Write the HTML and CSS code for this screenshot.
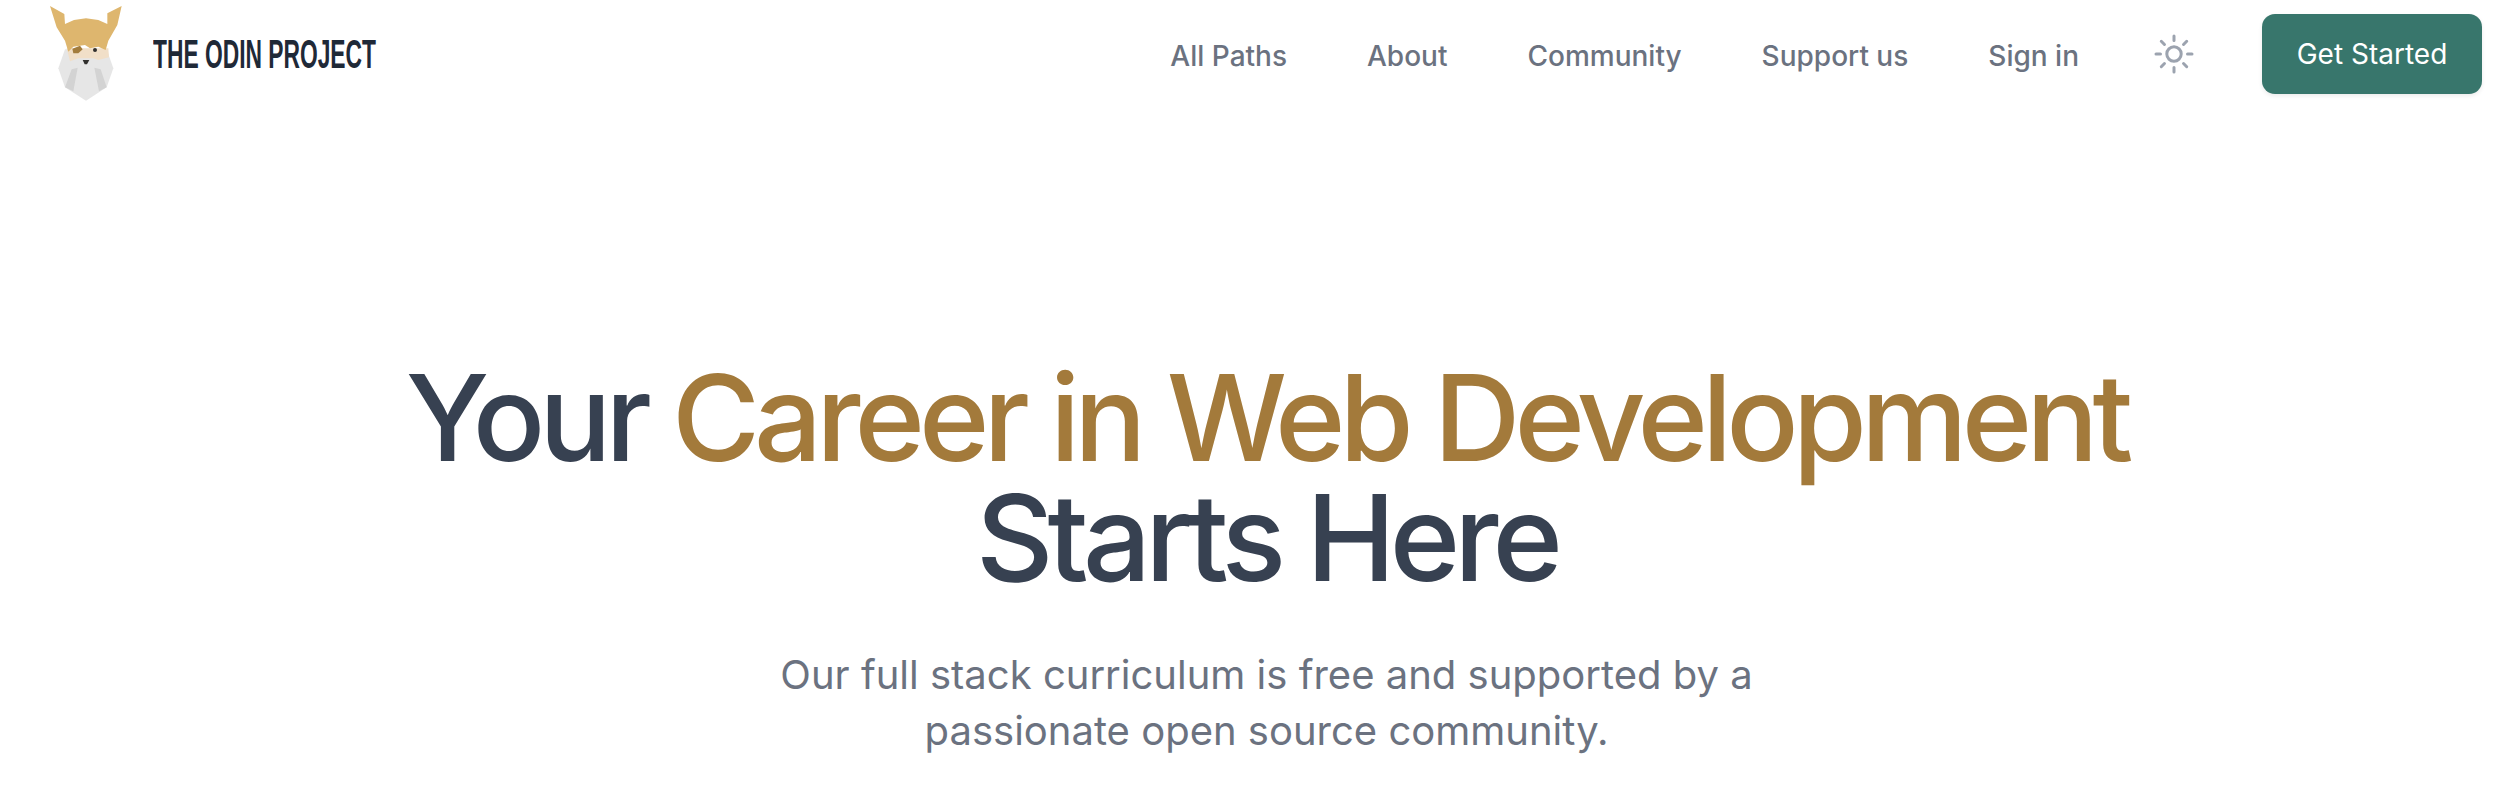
FILE: index.html
```html
<!DOCTYPE html>
<html lang="en">
<head>
<meta charset="UTF-8">
<title>The Odin Project</title>
<link rel="stylesheet" href="styles.css">
</head>
<body>
<div class="navbar">
    <a class="brand" href="#">
        <svg class="brand-logo" viewBox="0 0 270 315" width="90" height="105">
            <path fill="#e6e6e6" d="M75 148 L55 205 L75 262 L138 302 L200 262 L220 205 L200 148 Z"/>
            <path fill="#d3d3d3" d="M95 208 L75 262 L100 274 L113 203 Z M163 203 L177 274 L200 262 L182 208 Z"/>
            <path fill="#f1dfc8" d="M80 145 L205 145 L207 172 L175 180 L160 175 L115 175 L90 184 Z"/>
            <path fill="#deb66e" d="M30 18 L73 42 L75 72 L102 60 L138 55 L175 60 L202 72 L202 40 L245 18 L232 75 L205 122 L197 150 L175 140 L150 145 L135 135 L100 140 L85 155 L75 122 L50 82 Z"/>
            <path fill="#a37c3c" d="M97 146 L120 137 L128 148 L115 160 L100 160 Z"/>
            <circle fill="#31302e" cx="165" cy="150" r="6"/>
            <path fill="#31302e" d="M128 180 L148 180 L141 193 L134 193 Z"/>
        </svg>
        <span class="brand-text">THE ODIN PROJECT</span>
    </a>
    <ul class="nav-links">
        <li><a href="#">All Paths</a></li>
        <li><a href="#">About</a></li>
        <li><a href="#">Community</a></li>
        <li><a href="#">Support us</a></li>
        <li><a href="#">Sign in</a></li>
    </ul>
    <svg class="theme-icon" viewBox="0 0 24 24" width="48" height="48" fill="none" stroke="#9ca3af" stroke-width="1.5" stroke-linecap="round">
        <circle cx="12" cy="12" r="3.6"/>
        <path d="M12 3v2.25M18.36 5.64l-1.59 1.59M21 12h-2.25M18.36 18.36l-1.59-1.59M12 18.75V21M7.23 16.77l-1.59 1.59M5.25 12H3M7.23 7.23L5.64 5.64"/>
    </svg>
    <a class="get-started" href="#">Get Started</a>
</div>

<div class="hero">
    <h1>Your <span class="gold">Career in Web Development</span><br>Starts Here</h1>
    <p>Our full stack curriculum is free and supported by a<br>passionate open source community.</p>
</div>
</body>
</html>
```
FILE: styles.css
```css
html, body {
    margin: 0;
    height: 100%;
    overflow: hidden;
}
body {
    font-family: Inter, "Liberation Sans", sans-serif;
    background-color: #fff;
}
a {
    text-decoration: none;
}

.navbar {
    display: flex;
    align-items: center;
    height: 108px;
    padding: 0 27px 0 40px;
}
.brand {
    display: flex;
    align-items: center;
    margin-right: auto;
}
.brand-logo {
    margin-top: -3px;
}
.brand-text {
    margin-left: 23px;
    font-family: "Liberation Sans Narrow", "Liberation Sans", sans-serif;
    font-size: 40px;
    font-weight: bold;
    color: #1f2937;
    display: inline-block;
    transform: scaleX(0.57);
    transform-origin: left center;
    white-space: nowrap;
}
.nav-links {
    list-style-type: none;
    display: flex;
    gap: 80px;
    margin: 4px 0 0;
    padding: 0;
}
.nav-links a {
    font-size: 28px;
    font-weight: 500;
    color: #6b7280;
}
.theme-icon {
    margin-left: 71px;
}
.get-started {
    margin-left: 64px;
    width: 220px;
    height: 80px;
    display: flex;
    align-items: center;
    justify-content: center;
    border-radius: 13px;
    background-color: #38766c;
    color: #fff;
    font-size: 28px;
    font-weight: 400;
    box-shadow: 0 2px 4px rgba(0, 0, 0, 0.08);
}

.hero {
    text-align: center;
    padding: 250px 0 0 24px;
}
.hero h1 {
    margin: 0;
    font-size: 120px;
    line-height: 120px;
    font-weight: 500;
    letter-spacing: -5.95px;
    color: #374151;
}
.gold {
    color: #a37a3b;
}
.hero p {
    margin: 49px 0 0;
    font-size: 40px;
    line-height: 56px;
    color: #6b7280;
}
```
